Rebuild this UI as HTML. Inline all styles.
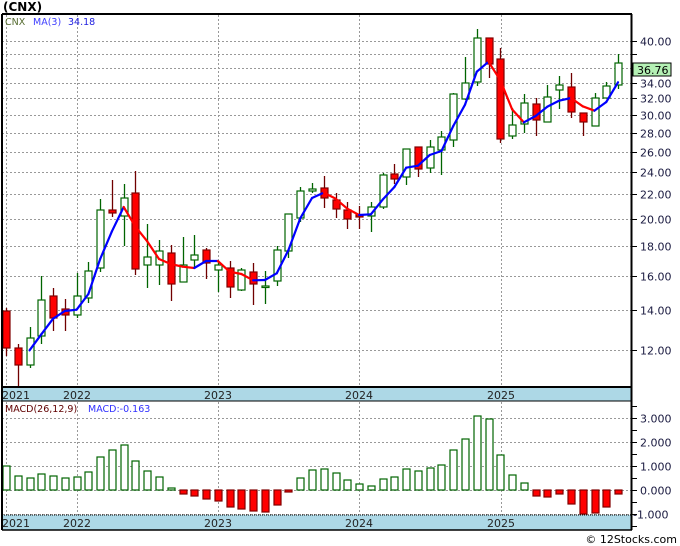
<!DOCTYPE html>
<html><head><meta charset="utf-8">
<style>
html,body{margin:0;padding:0;background:#fff;}
body{width:680px;height:546px;overflow:hidden;position:relative;font-family:"DejaVu Sans","Liberation Sans",sans-serif;}
svg{position:absolute;left:0;top:0;}
</style></head>
<body>
<svg id="s" width="680" height="546" xmlns="http://www.w3.org/2000/svg" font-family="DejaVu Sans, Liberation Sans, sans-serif">
<text x="3" y="11" font-size="12" font-weight="bold" fill="#000">(CNX)</text>
<g id="grid"></g>
<g id="cand"></g>
<g id="ma"></g>
<g id="macd"></g>
<!-- bands -->
<rect x="2" y="387" width="630" height="14" fill="#add8e6"/>
<rect x="2" y="515" width="630" height="15" fill="#add8e6"/>
<line x1="2" y1="387" x2="632" y2="387" stroke="#000" stroke-width="2"/>
<line x1="2" y1="401" x2="632" y2="401" stroke="#000" stroke-width="1"/>
<line x1="2" y1="515" x2="632" y2="515" stroke="#000" stroke-width="1" stroke-dasharray="1,1"/>
<line x1="2" y1="530" x2="632" y2="530" stroke="#000" stroke-width="1.5"/>
<line x1="2" y1="14" x2="632" y2="14" stroke="#000" stroke-width="2"/>
<line x1="2" y1="14" x2="2" y2="530" stroke="#000" stroke-width="2"/>
<line x1="631.5" y1="14" x2="631.5" y2="530" stroke="#000" stroke-width="2"/>
<g font-size="11" fill="#222">
<text x="2" y="399">2021</text><text x="63" y="399">2022</text><text x="204" y="399">2023</text><text x="345" y="399">2024</text><text x="487" y="399">2025</text>
<text x="2" y="527">2021</text><text x="63" y="527">2022</text><text x="204" y="527">2023</text><text x="345" y="527">2024</text><text x="487" y="527">2025</text>
</g>
<g font-size="9.5">
<text x="5" y="25" fill="#556b2f">CNX</text>
<text x="33" y="25" fill="#4040ff">MA(3)</text>
<text x="68" y="25" fill="#2020e0">34.18</text>
<text x="5" y="412" fill="#600000">MACD(26,12,9)</text>
<text x="88" y="412" fill="#3030ff">MACD:-0.163</text>
</g>
<g id="axis" font-size="11" fill="#1a1a40"></g>
<rect x="633" y="63" width="38" height="13" fill="#b4f0b4" stroke="#000" stroke-width="1"/>
<text x="637" y="74" font-size="11" fill="#000">36.76</text>
<text x="677" y="543" font-size="11" fill="#000" text-anchor="end">© 12Stocks.com</text>
</svg>
<script>
var NS="http://www.w3.org/2000/svg";
function el(p,t,a){var e=document.createElementNS(NS,t);for(var k in a)e.setAttribute(k,a[k]);p.appendChild(e);return e;}
var G=document.getElementById('grid'),C=document.getElementById('cand'),M=document.getElementById('ma'),D=document.getElementById('macd'),A=document.getElementById('axis');
function py(p){return 41+(Math.log(40)-Math.log(p))*256.6;}
// horizontal grid
for(var p=12;p<=40;p+=2){var y=Math.round(py(p))+0.5;el(G,'line',{x1:2,y1:y,x2:631,y2:y,stroke:'#999','stroke-dasharray':'2,2','stroke-width':1});el(A,'line',{x1:632,y1:y,x2:637,y2:y,stroke:'#000'});
 if(p!=36&&p!=38){var t=el(A,'text',{x:640,y:y+4});t.textContent=p.toFixed(2);}}
[13].forEach(function(){});
[3,2,1,0,-1].forEach(function(v){var y=490-v*24+0.5;el(G,'line',{x1:2,y1:y,x2:631,y2:y,stroke:'#999','stroke-dasharray':'2,2'});var t=el(A,'text',{x:v<0?633:640,y:y+4});t.textContent=v.toFixed(3);});
for(var v=-1.5;v<=3.5;v+=0.5){var y=490-v*24+0.5;if(y>402&&y<530)el(A,'line',{x1:632,y1:y,x2:637,y2:y,stroke:'#000'});}
[6,77,218,359,501].forEach(function(x){el(G,'line',{x1:x+0.5,y1:15,x2:x+0.5,y2:387,stroke:'#999','stroke-dasharray':'2,2'});el(G,'line',{x1:x+0.5,y1:402,x2:x+0.5,y2:515,stroke:'#999','stroke-dasharray':'2,2'});});
// candles: top,bottom,high,low,red
var c=[[311,348,308,356,1],[348,365,344,387,1],[338,365,327,368,0],[300,336,276,344,0],[296,318,288,331,1],[309,315,299,331,1],[296,315,273,318,0],[271,298,262,303,0],[210,268,199,272,0],[210,213,180,217,1],[198,216,184,246,0],[193,269,171,275,1],[257,265,224,288,0],[251,265,240,285,0],[253,284,245,301,1],[265,282,237,282,0],[255,260,235,268,0],[250,263,248,279,1],[265,270,262,292,0],[268,287,261,298,1],[270,290,268,291,0],[272,284,263,305,1],[286,287,271,304,0],[250,281,246,286,0],[214,251,214,258,0],[191,218,187,222,0],[189,191,183,193,0],[188,198,176,208,1],[200,209,193,218,1],[210,219,202,229,1],[215,217,206,229,1],[207,216,202,232,0],[175,207,173,209,0],[174,179,164,184,1],[149,177,149,185,0],[147,169,147,177,1],[147,168,140,173,0],[137,150,131,175,0],[94,140,93,147,0],[83,99,57,100,0],[38,82,29,86,0],[38,64,38,78,1],[59,139,48,143,1],[125,136,108,139,0],[103,124,94,133,0],[104,120,98,136,1],[97,122,85,122,0],[85,90,76,109,0],[87,112,73,118,1],[113,122,113,136,1],[98,126,93,126,0],[86,98,82,98,0],[63,85,54,89,0]];
var X=function(i){return 6+i*11.77;};
var closes=[];
c.forEach(function(d,i){var x=Math.round(X(i))+0.5;var red=d[4];
 el(C,'line',{x1:x,y1:d[2],x2:x,y2:d[3],stroke:red?'#700000':'#006400','stroke-width':1.3});
 var h=Math.max(d[1]-d[0],1.5);
 el(C,'rect',{x:x-3.5,y:d[0],width:7,height:h,fill:red?'#ff0000':'#fff',stroke:red?'#800000':'#006400','stroke-width':1.2});
 closes.push(red?d[1]:d[0]);});
var ma=[];for(var i=2;i<c.length;i++)ma.push([X(i),(closes[i]+closes[i-1]+closes[i-2])/3]);
for(var i=1;i<ma.length;i++){el(M,'line',{x1:ma[i-1][0],y1:ma[i-1][1],x2:ma[i][0],y2:ma[i][1],stroke:ma[i][1]<=ma[i-1][1]?'#0000ff':'#ff0000','stroke-width':2.2,'stroke-linecap':'round'});}
// macd
var m=[466,476,478,474,476,478,477,472,457,450,445,461,471,477,488,494,496,499,501,507,509,511,512,505,492,478,470,469,473,480,484,486,479,477,469,471,468,465,450,439,416,419,455,475,483,496,497,494,504,514,513,507,494];
m.forEach(function(v,i){var x=Math.round(X(i))+0.5;var g=v<490;
 var y=g?v:490,h=Math.max(Math.abs(v-490),1.5);
 el(D,'rect',{x:x-3.5,y:y,width:7,height:h,fill:g?'#fff':'#ff0000',stroke:g?'#006400':'#800000','stroke-width':1.2});});
</script>
</body></html>
